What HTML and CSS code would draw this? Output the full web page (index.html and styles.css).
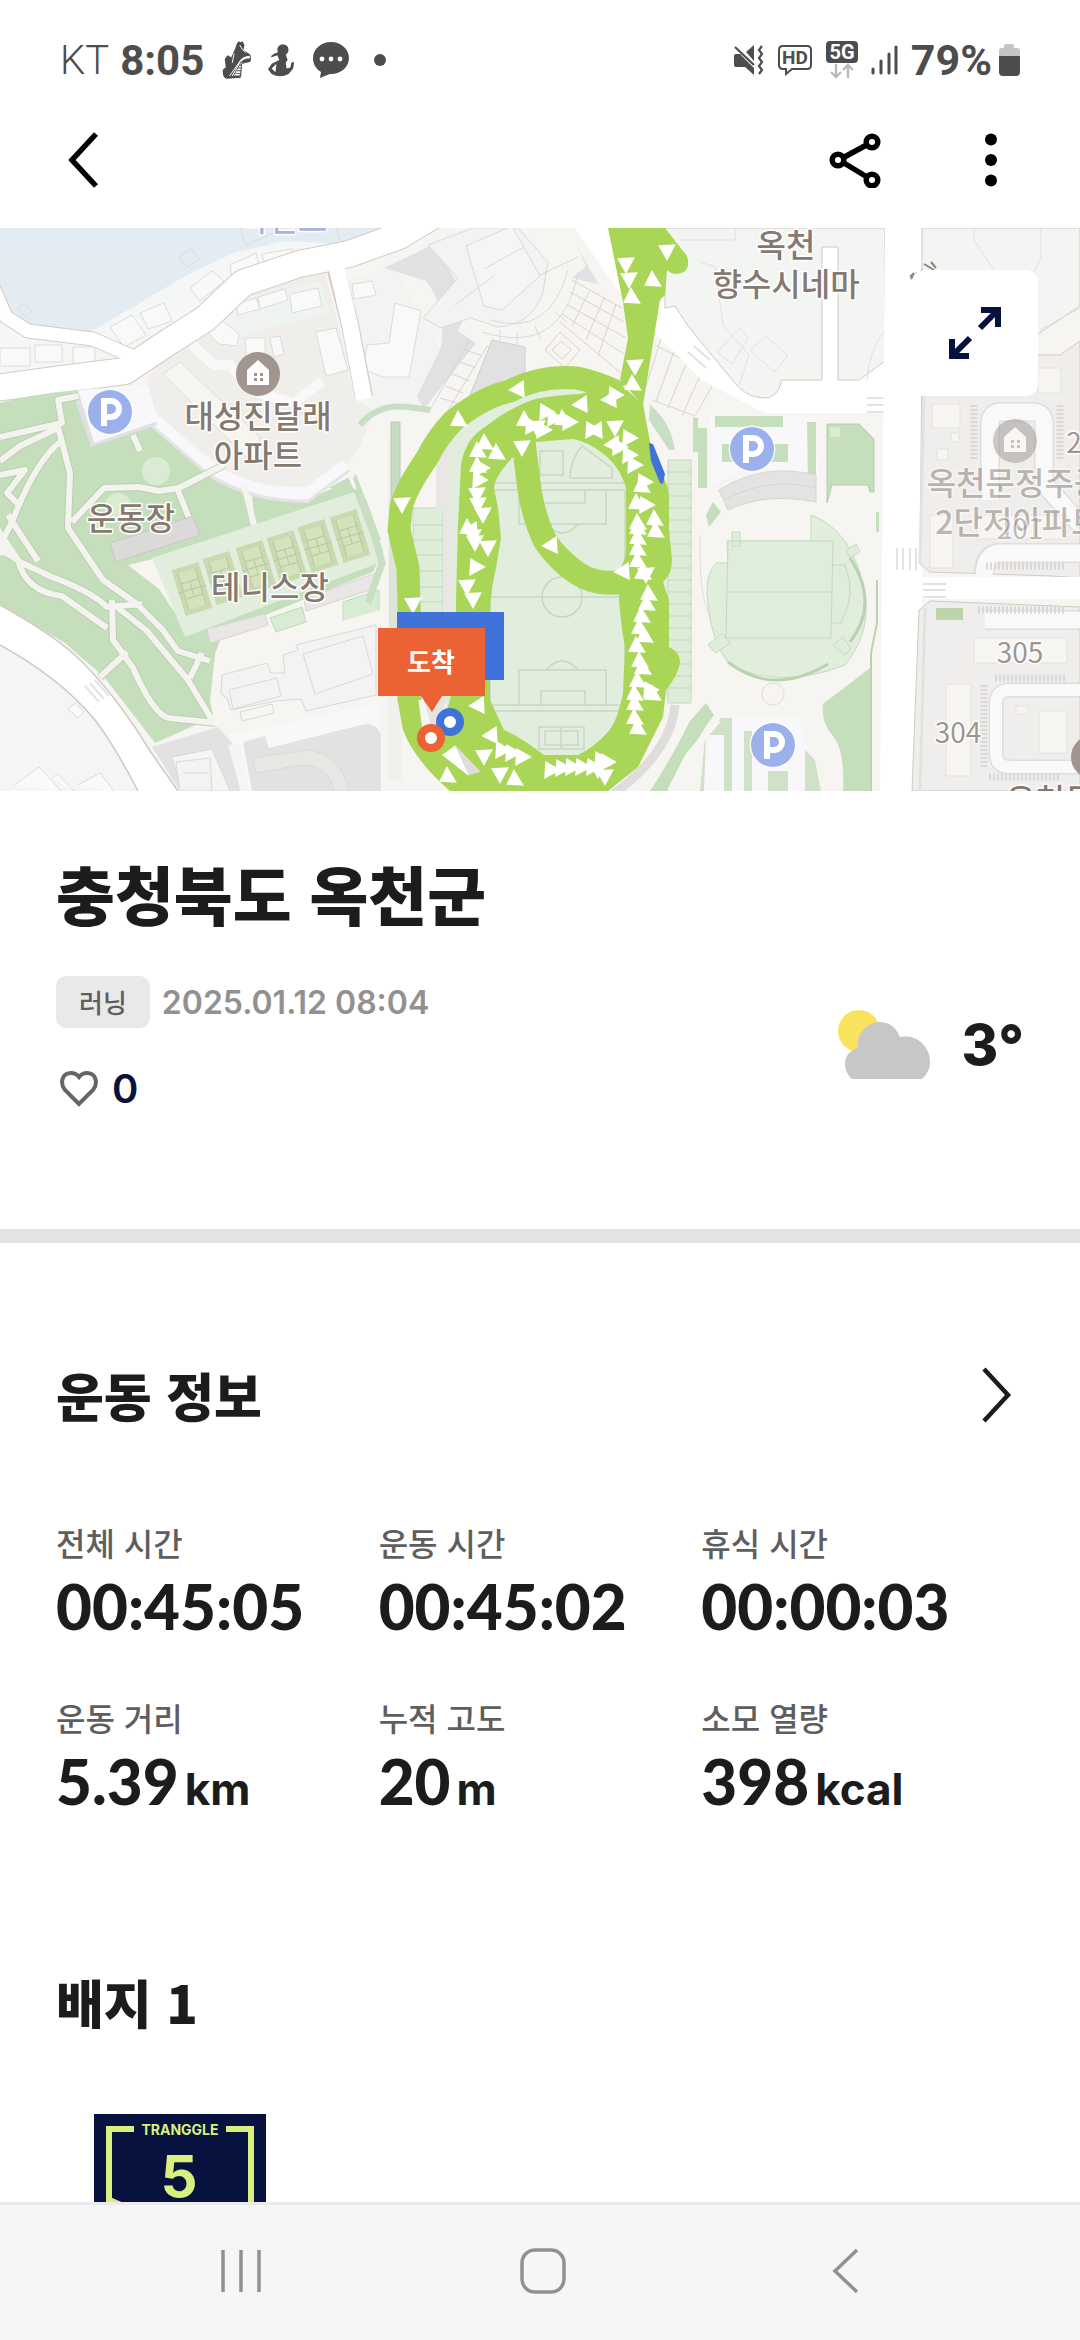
FILE: index.html
```html
<!DOCTYPE html>
<html lang="ko">
<head>
<meta charset="UTF-8">
<meta name="viewport" content="width=device-width, initial-scale=1.0">
<title>운동 기록</title>
<link rel="stylesheet" href="styles.css">
</head>
<body>
<div class="screen">

<div class="status-bar">
<div class="status-left">
<span class="carrier">KT</span>
<span class="clock">8:05</span>
<svg class="shoe" width="30" height="40" viewBox="0 0 32 42">
<path d="M17 3l2-2 2 1 2-1 2 4-1 5 7 5q2 4 0 8l-9 2-1 15-14 1q-6 0-5-10l3-2-1-9 3-4 4 2 4-9z" fill="#4d4d4d"/>
<path d="M30 17q-8 1-11 7L9 38M14 14l-2 10M20 5l3 5 4 3" fill="none" stroke="#fff"/>
<path d="M31 18q-6 0-9 3l-9 16h7M21 25h9M19 28h7M17 31h5M15 34h6" fill="none" stroke="#fff" stroke-width="2"/>
<path d="M22 22l-9 16h8l1-13 9-3" fill="none" stroke="#4d4d4d" stroke-width="1"/>
</svg>
<svg class="runner" width="28" height="34" viewBox="0 0 30 36">
<circle cx="16" cy="7" r="6" fill="#4d4d4d"/>
<path d="M13 9l-6 2-4 3 1 1 6-2 2 5-8 4-4 6 4 5q9 5 18 0l5-6 1-7-3 1-1 5-4 1-1-6 2-3-2-6z" fill="#4d4d4d"/>
<path d="M9 22l-5 5 4 4z" fill="#fff"/>
</svg>
<svg width="36" height="36" viewBox="0 0 36 36">
<path d="M18 0c10 0 18 7 18 16s-8 16-18 16c-2 0-6 2-11 4l1-6C3 27 0 22 0 16 0 7 8 0 18 0z" fill="#4d4d4d"/>
<circle cx="9" cy="17" r="2.4" fill="#fff"/><circle cx="18" cy="17" r="2.4" fill="#fff"/><circle cx="27" cy="17" r="2.4" fill="#fff"/>
</svg>
<span class="more-dot"></span>
</div>
<div class="status-right">
<svg width="30" height="30" viewBox="0 0 30 30">
<path d="M0 11q0-2 2-2h4l14 14v7l-9-8H2q-2 0-2-2zM20 0v16l-8-9z" fill="#4d4d4d"/>
<path d="M1 2l19 18M28 1l-3 4 3 4-3 4 3 4-3 4 3 4-3 4" fill="none" stroke="#4d4d4d" stroke-width="2.2"/>
</svg>
<svg width="36" height="32" viewBox="0 0 36 32">
<path d="M6 2h24q4 0 4 4v15q0 4-4 4H15l-6 5v-5H6q-4 0-4-4V6q0-4 4-4z" fill="none" stroke="#4d4d4d" stroke-width="2"/>
<text x="18" y="20" class="hd">HD</text>
</svg>
<svg width="32" height="38" viewBox="0 0 32 38">
<rect width="32" height="22" rx="4" fill="#4d4d4d"/>
<text x="16" y="18" class="fiveg">5G</text>
<path d="M10 23v13M5 31l5 5 5-5M22 37V24M17 29l5-5 5 5" fill="none" stroke="#b9b9b9" stroke-width="2.4"/>
</svg>
<svg width="27" height="30" viewBox="0 0 27 30">
<path d="M2 24v4M10 16v12M18 9v19M25 2v26" stroke="#4d4d4d" stroke-width="3" stroke-linecap="round"/>
</svg>
<span class="battery-text">79%</span>
<svg width="21" height="32" viewBox="0 0 21 32">
<path d="M0 12V7q0-3 3-3h2V2q0-2 2-2h6q2 0 2 2v2h3q3 0 3 3v5z" fill="#c4c4c4"/>
<path d="M0 12h21v16q0 4-4 4H4q-4 0-4-4z" fill="#4d4d4d"/>
</svg>
</div>
</div>

<header class="app-bar">
<button class="icon-btn" aria-label="뒤로">
<svg width="36" height="58" viewBox="0 0 36 58"><path d="M30 3L6 29l24 26" fill="none" stroke="#000" stroke-width="5.5"/></svg>
</button>
<div class="app-actions">
<button class="icon-btn" aria-label="공유">
<svg width="54" height="56" viewBox="0 0 54 56">
<path d="M11 28L44 10M11 28l33 20" stroke="#000" stroke-width="5.5"/>
<g fill="#fff" stroke="#000" stroke-width="5.5"><circle cx="10" cy="28" r="5.8"/><circle cx="44" cy="10" r="5.8"/><circle cx="44" cy="48" r="5.8"/></g>
</svg>
</button>
<button class="icon-btn" aria-label="더보기">
<svg width="14" height="54" viewBox="0 0 14 54"><circle cx="7" cy="6.5" r="6"/><circle cx="7" cy="27" r="6"/><circle cx="7" cy="47.5" r="6"/></svg>
</button>
</div>
</header>

<main class="content">

<div class="map">
<svg class="map-svg" viewBox="0 228 1080 563">
<defs>
<marker id="up" viewBox="-9 -9 18 18" markerWidth="20" markerHeight="20" markerUnits="userSpaceOnUse"><path d="M-1-8L8 7-8 6z" fill="#fff"/></marker>
<marker id="down" viewBox="-9 -9 18 18" markerWidth="20" markerHeight="20" markerUnits="userSpaceOnUse"><path d="M0 8L8-7-8-6z" fill="#fff"/></marker>
<marker id="right" viewBox="-9 -9 18 18" markerWidth="20" markerHeight="20" markerUnits="userSpaceOnUse"><path d="M8 0L-7 8-6-8z" fill="#fff"/></marker>
<marker id="left" viewBox="-9 -9 18 18" markerWidth="20" markerHeight="20" markerUnits="userSpaceOnUse"><path d="M-8 1L6-8 7 8z" fill="#fff"/></marker>
<g id="parking"><circle r="23.5" fill="#fff" opacity=".8"/><circle r="22" fill="#9cb1eb"/><path d="M-6 14v-25h7a8 8 0 0 1 0 16h-7" fill="none" stroke="#fff" stroke-width="6"/></g>
<g id="home"><circle r="22" fill="#a0968f"/><path d="M-11 11V-4L0-14 11-4v15z" fill="#fff"/><path d="M-4-1h3v3h-3zM2-1h3v3H2zM-4 4h3v3h-3zM2 4h3v3H2z" fill="#a0968f"/></g>
<g id="court"><rect x="-14" y="-24" width="28" height="48" fill="#c9dab0"/><rect x="-9" y="-19" width="18" height="38" fill="#d5e3bd"/><path d="M-9-8H9M-9 8H9M-14 0h28M0-8V8M-9-19v38M9-19v38" fill="none" stroke="#b6c9a0"/></g>
</defs>

<rect y="228" width="1080" height="563" fill="#f7f5f1"/>

<!-- upper left blocks -->
<path d="M0 228h440l-60 30-140 30-60 50-90 0L0 400z" fill="#f5f6f6"/>
<path d="M0 228h400l-38 17-78-4-51 12-46 22-54 32-45 26-58-5-18-12-12-28z" fill="#e4ecf3"/>
<path d="M200 320l40-35 60-20 25 10 15 55 15 70 20 10-15 35-22 34-25 18-28 0-50-20-92-70 5-30z" fill="#efeeeb"/>
<path d="M200 332l38-33 82-17 10 30-90 25-3 12z" fill="#eff4f0"/>
<path d="M345 280l50-12 45 80-25 62-40 5-10-20z" fill="#f1f4f1"/>
<g fill="#f9f9f9" stroke="#dedcd8">
<path d="M110 327l22-12 14 20-22 12zM140 313l24-10 8 18-24 8zM190 288l22-17 12 10-24 20zM230 265l26-12 4 17-28 8zM262 254l30-5 2 14-28 6z"/>
<path d="M0 348h30v18H0zM35 345h27v17H35zM73 347h22v18H73zM236 304l20-6 4 11-22 6zM258 297l27-8 3 11-28 9zM290 294l28-6 4 18-30 7zM205 330l16-10 18 14-2 12-18-2z"/>
<path d="M316 332l20-4 12 42-22 6zM245 338h20v30l-18-4zM270 338l10-2 4 18-10 3zM352 284l20-3 4 14-22 4zM395 303l26 8-12 66-26 0-20-8 4-24 22-2z"/>
<path d="M163 374l17-12 80 75-6 28z" fill="#f7f5f0"/>
<path d="M179 257l12-8 8 10-12 8zM18 309l6-6 8 8-6 6zM240 228l6 17 38-17zM336 228l6 16 40-16z" fill="none"/>
</g>
<path d="M192 345l22 20 16 0 22 26 42 12 28-22" fill="none" stroke="#f8f8f9" stroke-width="10"/>

<!-- roads, upper left -->
<g fill="none" stroke="#d2ccc4" stroke-linejoin="round">
<path d="M-5 388l60-8 70-9 45-30 35-22 38-36 56-19 50-10 50-18 50-30" stroke-width="28"/>
<path d="M-8 285l14 32 22 14 65 8 50 22" stroke-width="15"/>
<path d="M336 270l14 55 14 72" stroke-width="18"/>
</g>
<g fill="none" stroke="#fff" stroke-linejoin="round">
<path d="M-5 388l60-8 70-9 45-30 35-22 38-36 56-19 50-10 50-18 50-30" stroke-width="26"/>
<path d="M-8 285l14 32 22 14 65 8 50 22" stroke-width="13"/>
<path d="M336 265l14 60 14 74" stroke-width="16"/>
</g>

<!-- park -->
<path d="M0 403q35-10 90-14l60 27 58 54 32 14 20 40 95-50 28 76-10 22-150 60-8 22 5 60-65 29-50-65-40-35L0 605z" fill="#c5dfbc"/>
<path d="M239 484l16 14 100-6-8-17 30-40 30 0 30 60-40 60-25-65z" fill="#f7f5f1"/>
<path d="M252 496l50 6 45-20 10 10-102 36z" fill="#c5dfbc"/>
<path d="M356 474l25 66-8-2-20-60z" fill="#c5dfbc"/>
<path d="M148 415l62 54q40 27 96 27l40-30" fill="none" stroke="#e4e4e6" stroke-width="14"/>
<path d="M148 413l62 54q40 27 96 27l40-30" fill="none" stroke="#f8f8fa" stroke-width="11"/>
<path d="M72 392l75-5 10 38-66 22z" fill="#e0e0e2"/>
<path d="M78 390l70-5 10 36-64 22z" fill="#f8f8fa"/>
<g fill="none" stroke="#b9d0af" stroke-width="8" stroke-linejoin="round">
<path d="M0 437l62-14-4-23 20-4M57 423l13 50-2 55 35 52 34 24 25 25 16 22 32 10M0 461l20-15 38-18M60 442q-25 20-48 80L0 545M0 475l25-5-18 23 12 12M72 522l32-34 35-1 20 4 20-3 45-23M177 488l12 30M0 549l22 14 30 14q40 15 55 30l35-3M18 560q8 32 44 36l45 32M8 515l30 46"/>
<path d="M112 600l1 40 20 28q20 45 35 50l50 5M118 608l28 22 42 50 24 40M202 653l-12 25M100 677l27-25M133 435l7 16"/>
</g>
<g fill="none" stroke="#f5f3ef" stroke-width="6" stroke-linejoin="round">
<path d="M0 437l62-14-4-23 20-4M57 423l13 50-2 55 35 52 34 24 25 25 16 22 32 10M0 461l20-15 38-18M60 442q-25 20-48 80L0 545M0 475l25-5-18 23 12 12M72 522l32-34 35-1 20 4 20-3 45-23M177 488l12 30M0 549l22 14 30 14q40 15 55 30l35-3M18 560q8 32 44 36l45 32M8 515l30 46"/>
<path d="M112 600l1 40 20 28q20 45 35 50l50 5M118 608l28 22 42 50 24 40M202 653l-12 25M100 677l27-25M133 435l7 16M244 485l10 40"/>
</g>
<path d="M0 528l12 18 8 12-20-3z" fill="#f5f3ef"/>
<circle cx="156" cy="471" r="14" fill="#d9ebd3"/><circle cx="118" cy="506" r="13" fill="#d9ebd3"/>
<path d="M110 543l83-27 7 19-84 27z" fill="#dcdad9" stroke="#c9c6c4"/>
<path d="M128 565l25-6 26 60-20-30z" fill="#f7f5f1"/>
<path d="M152 558l202-66 27 70-196 75z" fill="#e1eedd"/>
<use href="#court" transform="translate(192 589) rotate(-17)"/>
<use href="#court" transform="translate(223 578) rotate(-17)"/>
<use href="#court" transform="translate(256 567) rotate(-17)"/>
<use href="#court" transform="translate(287 557) rotate(-17)"/>
<use href="#court" transform="translate(318 546) rotate(-17)"/>
<use href="#court" transform="translate(350 536) rotate(-17)"/>
<g stroke="#d8d4d0" fill="#e9e7e5">
<path d="M207 629l58-15 3 11-58 18zM304 599l72-26v15l-70 23z"/>
<path d="M270 618l32-11 4 15-30 10zM343 602l36-12v25l-36 8z" fill="#d8ebd3" stroke="#c2dabc"/>
</g>

<!-- sports hall and lower blocks -->
<path d="M215 655l80-28 10 5 75-22v200H150l4-44 64-24-8-42z" fill="#f7f5f1"/>
<path d="M230 735l150-32v88H248z" fill="#f8f8f9"/>
<path d="M152 747l66-20 14 16 8 48h-60zM243 742l22-6 4 12 96-24q14 0 16 12v55H252z" fill="#e2e2e2"/>
<g fill="#f3f3f3" stroke="#d9d9da">
<path d="M222 675l45-12 4 10 14 0-2-18 15-5-2-5 80-20v70l-70 16-5-12-25 2-45 9-4-12-6-4z"/>
<path d="M303 654l60-18 10 38-58 20zM229 690l48-12 4 18-48 13zM240 712l32-8 2 9-32 8z" fill="none"/>
<path d="M172 757l40-8 18 42h-48z" fill="#f7f5f1"/><path d="M176 762l34-4 2 33h-32zM183 773l26 0"/>
<path d="M252 758l55-8q35 4 42 41h-15q-5-26-32-26l-46 8z" fill="#e9e7e3"/>
<path d="M228 745l12-2 10 48h-9z" fill="#f7f5f1" stroke="none"/>
</g>
<path d="M0 645l40 25 55 50 25 45 18 30H0z" fill="#f5f5f5"/>
<path d="M0 605q50 28 75 50 40 38 75 96l28 40h-40q-25-48-43-71Q60 678 0 645z" fill="#fff"/>
<path d="M0 605q50 28 75 50 40 38 75 96l28 40M138 791q-25-48-43-71Q60 678 0 645" fill="none" stroke="#cfc9c0" stroke-width="1.5"/>
<path d="M85 686l14 16M90 683l14 16M95 680l14 16" stroke="#dfe5e8" stroke-width="2"/>
<path d="M15 785l24-18 22 24M78 785l22-12 14 18M52 778l6-4 16 17M68 709l8-6 8 9-6 6z" fill="#fafafa" stroke="#dcdcdc"/>

<!-- plaza in the middle -->
<path d="M384 268l50-24 36 60-12 27 18 12-52 66-7-12 24-50q6-40-15-66z" fill="#e1e1e3"/>
<path d="M492 340l33 7v38l-58 18z" fill="#e1e1e3" stroke="#cfcfd2"/>
<path d="M572 278l14-12-10-22 22 40z" fill="#e1e1e3"/>
<g fill="#f3f3f4" stroke="#dadadd">
<path d="M428 245l45-17h45l30 34-5 30q-10 32-45 35l-27-9-30 10-18-10 35-40z"/>
<path d="M466 246l46-20 28 50-38 34-18-4z" fill="#f5f5f6"/>
<path d="M484 269l40-22M455 305l40-30M540 275l38-18" fill="none"/>
<path d="M490 320q60 18 78-50M482 332q80 25 96-60M500 330v12M517 332v13M535 326l6 14M555 312l12 10" fill="none"/>
<path d="M470 340l-40 70M488 345l-40 65M466 350l16 6M460 362l16 6M452 374l18 7M446 386l17 7M440 398l17 5" fill="none" stroke="#d8d5d1"/>
<path d="M545 350l15-18 20 18-15 18zM552 350l9-9 10 9-9 9z" fill="none" stroke="#d8d5d1"/>
<path d="M572 280l50 28M570 292l54 30M566 304l60 34M562 314l62 40M560 322l62 52M590 290l-18 36M604 298l-18 42M616 304l-18 52" fill="none" stroke="#d8d5d1"/>
<path d="M664 335l60 36M655 345l62 32M652 400l60 22M664 330l-20 62M678 340l-22 62M692 350l-24 58M706 362l-24 54M720 372l-26 46" fill="none" stroke="#d8d5d1"/>
</g>
<path d="M360 425q18-22 48-18l22 3" fill="none" stroke="#c8dfc2" stroke-width="6"/>
<path d="M360 495q10 20 22 68l-14 40" fill="none" stroke="#c8dfc2" stroke-width="7"/>

<!-- theatre block and diagonal road -->
<path d="M573 226l60 85 70 70 62 32h155v-190z" fill="#fff"/>
<path d="M610 228h275v133l-26 19h-78v3q-4 16-18 15-18-1-30-17l-45-55-13-20-10 2v-30z" fill="#f2f5f2" stroke="#d0cac2"/>
<path d="M822 383v-136h16v136z" fill="#fff"/><path d="M822 380V247h16v133" fill="none" stroke="#d0cac2"/>
<g fill="none" stroke="#e0e2df"><path d="M680 240h55v-12M700 262l15 5 8 58 26 30-10 30M750 350l16-14 22 20-14 16zM717 352l23-24 8 10-16 26zM885 330q-16 20-18 50"/></g>
<path d="M867 398h23M867 405h23M867 412h23M688 352l18 16M694 346l16 14" stroke="#dfe4e6" stroke-width="2"/>

<!-- right hand park -->
<path d="M695 415h172l16 20v356H660z" fill="#f7f5f1"/>
<path d="M710 416h105l4 66q-60-30-108 5z" fill="#f8f8fa"/>
<path d="M715 416h68v11h-68zM698 428h9v60h-9zM807 422h9v60l-8-2zM722 444h66v18h-66zM693 418h5v34h-5z" fill="#c5dfbc"/>
<path d="M719 490q45-28 97-15v27q-50-10-88 8z" fill="#e4e3e2" stroke="#d6d5d4"/>
<path d="M724 500q45-24 92-12" fill="none" stroke="#d6d5d4"/>
<path d="M827 424h32l15 15v53h-4l-2-7h-36l-5 18z" fill="#c5dfbc" stroke="#b4ccac"/>
<path d="M830 427h10v10h-10z" fill="#d9ebd3"/>
<path d="M706 515l7-13 8 10-12 15zM876 512h3v20h-3zM870 668l-47 36q-2 20 10 32 12 14 10 55h27z" fill="#c5dfbc"/>
<path d="M877 580v43l-6 30v138" fill="none" stroke="#b9d3b1" stroke-width="2"/>
<path d="M700 535q-2 80 20 95 60 30 110 8" fill="none" stroke="#e2dfda"/>
<path d="M727 541h84V515q28 10 42 40 30 64-8 110-65 25-115 0-18-22-22-60-4-30 8-42l12 0z" fill="#e0eedb" stroke="#c9d8c4"/>
<path d="M850 558q30 45 0 84M728 662q45 35 100 2" fill="none" stroke="#b9d3b1" stroke-width="3"/>
<path d="M728 541h105l-2 97H726zM727 592h106M833 565h12q12 28-4 58h-10M732 532h8v14h-8zM846 550l10-6 4 8-10 6zM708 645l14-12 8 10-14 10zM833 645l10-8 8 12-6 6z" fill="#dfeeda" stroke="#c9d8c4"/>
<circle cx="773" cy="694" r="11" fill="none" stroke="#e0ddd8"/>
<path d="M715 718h85l15 73H700z" fill="#f8f8fa"/>
<path d="M700 791l5-55 6-8 10-10h11v73h-8v-56h-18l-2 56zM752 791v-60h-8v60zM768 791v-20h20v20zM805 750l10 10 6 31h-16z" fill="#cfe2c8"/>
<path d="M650 791q20-30 40-70l16-18 8 12-10 14-35 62z" fill="#c5dfbc"/>
<path d="M718 720l-30 36-18 35" fill="none" stroke="#f8f6f2" stroke-width="6"/>

<!-- running field -->
<path d="M388 440h14v340h-14z" fill="#f2f0ec"/>
<path d="M391 422h9v100h-9z" fill="#c9dbc3" stroke="#bccdb7"/>
<path d="M389 500h9v160h-9z" fill="#dde4d8"/>
<path d="M650 405q20 15 25 45l-6 0-20-30z" fill="#c9dfc3"/>
<path d="M440 445q40-60 110-60l80 10 38 100v200l-38 80-100 22-60-10-24-60V620z" fill="#e1eedd"/>
<path d="M413 508h30v120h-30zM668 460h23v243h-23z" fill="#deedd8" stroke="#c6d5c1"/>
<path d="M413 525h30M413 540h30M413 555h30M413 571h30M413 587h30M413 602h30M668 472h24M668 484h24M668 496h24M668 508h24M668 520h24M668 532h24M668 544h24M668 556h24M668 568h24M668 580h24M668 592h24M668 604h24M668 616h24M668 628h24M668 640h24M668 652h24M668 664h24M668 676h24M668 688h24" stroke="#c6d5c1"/>
<path d="M436 450h14v60h-14zM443 510h8v160h-8z" fill="#eae6e4"/>
<g fill="none" stroke="#c9d6c5" stroke-width="1.5">
<path d="M490 483h135M490 490v215h135V490zM490 597h135M490 711h135M519 490v34h87v-34M541 490v13h44v-13M519 705v-35h87v35M541 705v-14h44v14M540 451h23v24h-23zM570 478q0-18 12-32l30 22v10zM539 727h45v22h-45zM545 731h33v14h-33zM561 727v22"/>
<circle cx="562" cy="597" r="20"/><path d="M546 524q16 18 32 0M546 670q16-18 32 0"/>
</g>
<path d="M675 705q-4 50-70 95" fill="none" stroke="#dedddb" stroke-width="9"/>
<path d="M422 695h26l-14 40z" fill="#e6e4e2"/>

<!-- recorded track -->
<path fill="#a9d656" fill-rule="evenodd" d="M458 525l3-60q4-26 24-38 25-20 50-28 20-4 45-5l40-10 23 20 7 38q4 18 14 36 5 10 5 20v32l3 30q0 14-9 22l6 18v47q12 6 11 16-2 12-14 27l-3 27-25 50-30 24H450q-35-30-47-61l-6-33 20-8 5 38q8 15 18 0 10-20 14-48l2-30V600zM512 458q-18 20-18 30l4 20 3 30-5 30q-5 20-6 45v87l14 30q15 6 40 25h34q15-7 29-22 10-10 16-40l2-46-3-17-3-30 1-32q6-8 6-20v-60q-6-22-25-36-13-10-28-13l-38 3z"/>
<path d="M410 700l-1-96-1-36-9-38 2-22q4-18 26-50 10-20 26-37 30-24 57-30 30-16 67-13 20 4 43 15" fill="none" stroke="#a9d656" stroke-width="23"/>
<path d="M453 446q20-26 52-40 40-20 80-14-50 0-88 18-26 14-36 32z" fill="#e1eedd"/>
<path d="M523 438l6 48q4 30 16 55 14 20 32 32 20 14 52 8" fill="none" stroke="#a9d656" stroke-width="24"/>
<path d="M608 228h57l22 28q5 16-10 18-6 0-10-4l-2 25-5 5-17 105-23-25 8-42-5-36z" fill="#a9d656"/>
<path d="M649 443l4 1 12 30-2 10-3-1-9-22z" fill="#3f73da"/>
<path d="M443 755l12-10 26 27-12 3z" fill="#dfdcda"/><path d="M442 755l13-9 14 30z" fill="#fff"/>
<g fill="none">
<path marker-start="url(#up)" marker-mid="url(#up)" marker-end="url(#up)" d="M459 419L653 279L632 296L633 383L525 419L563 418L485 442L478 450L497 452L478 465L642 485L637 502L638 522L655 518L656 530L638 527L638 537L638 548L638 560L643 572L649 593L647 603L642 615L640 627L645 635L637 645L640 660L643 667L638 680L635 693L653 693L635 703L635 717L638 727L448 775L515 778L468 527"/>
<path marker-start="url(#down)" marker-mid="url(#down)" marker-end="url(#down)" d="M667 252L626 265L629 280L635 367L402 505L522 448L615 428L477 495L478 505L537 428L413 605L467 587L473 600L475 543L488 548L473 537L500 775L484 757L483 515L605 777L598 770L646 575"/>
<path marker-start="url(#right)" marker-mid="url(#right)" marker-end="url(#right)" d="M477 567L480 480L482 468L630 438L630 455L620 447L635 465L645 482L647 505L593 430L547 412L555 418L570 422L533 426L544 430L616 395L552 770L563 768L573 767L583 767L608 762L602 760L594 767L523 757L513 753L503 750L651 690"/>
<path marker-start="url(#left)" marker-mid="url(#left)" marker-end="url(#left)" d="M517 389L477 705L550 545L490 735L580 404L609 399L595 430L612 444L470 530L622 571"/>
</g>
<path d="M397 612h107v68H397z" fill="#3f73da"/>
<path d="M378 628h107v68h-43l-10 16-11-16h-43z" fill="#eb6234"/>
<text x="431" y="672" class="pin-text">도착</text>
<circle cx="450" cy="722" r="10" fill="#fff" stroke="#3f73da" stroke-width="8"/>
<circle cx="431" cy="738" r="10" fill="#fff" stroke="#eb6234" stroke-width="8"/>

<!-- apartments on the right -->
<path d="M885 228h37v563h-42z" fill="#fff"/>
<path d="M922 228h158v78l-42 28H922z" fill="#f2f5f2" stroke="#d0cac2"/>
<path d="M974 228v12l30 45M1041 228v30l-20 40M1040 330l40-22" fill="none" stroke="#dfe0dd"/>
<path d="M922 355h138l20-14v237l-28-2-122-4-10-8z" fill="#efeeec" stroke="#d0cac2"/>
<path d="M930 601l150 6v184H912l7-181z" fill="#efeeec" stroke="#d0cac2"/>
<path d="M920 395l4-1-4 170M925 608l-5 183" fill="none" stroke="#e0e4df" stroke-width="3"/>
<g fill="none" stroke="#dedddf" stroke-linejoin="round">
<path d="M990 500v-76q0-12 12-12h30q12 0 12 12v60l36 40M1080 553h-80q-16 0-16 20M1080 620h-95" stroke-width="20"/>
<path d="M1080 690h-70q-14 0-14 14v50q0 13 14 13h70" stroke-width="15"/>
</g>
<g fill="none" stroke="#f9f9fa" stroke-linejoin="round">
<path d="M990 500v-76q0-12 12-12h30q12 0 12 12v60l36 40M1080 553h-80q-16 0-16 26M1080 620h-95" stroke-width="17"/>
<path d="M1080 690h-70q-14 0-14 14v50q0 13 14 13h70" stroke-width="12"/>
</g>
<path d="M900 577h180v22H900z" fill="#fff"/>
<path d="M932 404h28v24h-28zM951 433h8v9h-8zM937 449h11v11h-11zM1038 368h23v25h-23zM974 638h93v25h-93zM946 684h25v92h-25zM1039 711h28v42h-28zM1016 706h12v8h-12zM930 515h23v53h-23zM977 515h90v24h-90z" fill="#f7f5f1" stroke="#e5e2df"/>
<path d="M986 566h78M995 678h72M984 685v82M989 777h72M978 610h88M974 405v55M1060 405v55" stroke="#dcd8d6" stroke-width="7" stroke-dasharray="2 2"/>
<path d="M936 608h27v12h-27z" fill="#bdd3a8"/>
<path d="M897 548v22M903 548v22M910 548v22M916 548v22M923 584h23M923 590h23M923 597h23" stroke="#dfe4e6" stroke-width="2"/>
<path d="M911 279l6-6M914 273l-4 4M921 270l4 4M924 264l10 6M931 262l5 6" stroke="#8a8580" stroke-width="2"/>

<use href="#parking" x="110" y="412"/>
<use href="#parking" x="752" y="449"/>
<use href="#parking" x="773" y="745"/>
<use href="#home" x="258" y="374"/>
<use href="#home" x="1015" y="441" opacity=".5"/>
<use href="#home" x="1093" y="757"/>
<g class="place">
<text x="258" y="428">대성진달래</text>
<text x="258" y="467">아파트</text>
<text x="131" y="530">운동장</text>
<text x="270" y="599">테니스장</text>
<text x="786" y="257">옥천</text>
<text x="786" y="296">향수시네마</text>
<text x="283" y="231" class="river">옥천초</text>
<text x="1065" y="812">옥천문정</text>
</g>
<g class="place faded">
<text x="1015" y="495">옥천문정주공</text>
<text x="1018" y="534">2단지아파트</text>
</g>
<g class="place num">
<text x="1020" y="539" opacity=".6">201</text>
<text x="1074" y="453">2</text>
<text x="1020" y="663">305</text>
<text x="958" y="743">304</text>
</g>
</svg>
<button class="expand-btn" aria-label="지도 확대">
<svg width="52" height="52" viewBox="0 0 52 52"><path d="M32 3h17v17M47 5L31 21M20 49H3V32M5 47l16-16" fill="none" stroke="#07123f" stroke-width="6"/></svg>
</button>
</div>

<section class="summary">
<h1>충청북도 옥천군</h1>
<div class="summary-row">
<div class="summary-info">
<div class="meta">
<span class="tag">러닝</span>
<time class="date">2025.01.12 08:04</time>
</div>
<button class="like" aria-label="좋아요">
<svg width="38" height="36" viewBox="0 0 38 36"><path d="M19 33L5 19C-1 11 3 2 11 2q5 0 8 4 3-4 8-4c8 0 12 9 6 17z" fill="none" stroke="#666" stroke-width="4"/></svg>
<span>0</span>
</button>
</div>
<div class="weather">
<svg width="92" height="70" viewBox="0 0 92 70">
<circle cx="21" cy="21" r="21" fill="#fae35c"/>
<path d="M14 69Q7 63 7 54q0-12 13-16-2-10 6-19 7-7 15-7 15 0 21 15 12-3 22 6 8 8 8 19 0 10-8 17z" fill="#c7c7c7"/>
</svg>
<span>3°</span>
</div>
</div>
</section>

<section class="workout">
<div class="section-head">
<h2>운동 정보</h2>
<button class="icon-btn" aria-label="운동 정보 더보기">
<svg width="36" height="58" viewBox="0 0 36 58"><path d="M6 3l24 26L6 55" fill="none" stroke="#1c1c1c" stroke-width="4.5"/></svg>
</button>
</div>
<dl class="stats">
<div class="stat"><dt>전체 시간</dt><dd>00:45:05</dd></div>
<div class="stat"><dt>운동 시간</dt><dd>00:45:02</dd></div>
<div class="stat"><dt>휴식 시간</dt><dd>00:00:03</dd></div>
<div class="stat"><dt>운동 거리</dt><dd>5.39<small>km</small></dd></div>
<div class="stat"><dt>누적 고도</dt><dd>20<small>m</small></dd></div>
<div class="stat"><dt>소모 열량</dt><dd>398<small>kcal</small></dd></div>
</dl>
</section>

<section class="badges">
<h2>배지 1</h2>
<svg class="badge" width="172" height="200" viewBox="0 0 172 200">
<path d="M0 0h172v150l-86 50-86-50z" fill="#07123f"/>
<path d="M40 15H15v120l71 45 71-45V15h-25" fill="none" stroke="#daf07e" stroke-width="6"/>
<path d="M14 82l20 9v20H14z" fill="#daf07e"/>
<text x="86" y="21" class="badge-brand">TRANGGLE</text>
<text x="85" y="83" class="badge-num">5</text>
</svg>
</section>
</main>

<nav class="nav-bar">
<button aria-label="최근 앱"><svg width="44" height="46" viewBox="0 0 44 46"><path d="M4 2v42M22 2v42M40 2v42" stroke="#919191" stroke-width="3.5"/></svg></button>
<button aria-label="홈"><svg width="46" height="46" viewBox="0 0 46 46"><rect x="2" y="2" width="42" height="42" rx="13" fill="none" stroke="#919191" stroke-width="3.5"/></svg></button>
<button aria-label="뒤로 가기"><svg width="30" height="46" viewBox="0 0 30 46"><path d="M27 2L5 23l22 21" fill="none" stroke="#919191" stroke-width="3.5"/></svg></button>
</nav>

</div>
</body>
</html>
```
FILE: styles.css
```css
* {
box-sizing: border-box;
}
body {
margin: 0;
background: #fff;
color: #1c1c1c;
font-family: Inter, "Noto Sans CJK KR", sans-serif;
}
h1, h2, dl, dd {
margin: 0;
}
h1, h2, dt, .tag {
font-family: "Noto Sans CJK KR", sans-serif;
}
h1, h2 {
font-weight: 900;
}
button {
padding: 0;
border: none;
background: none;
color: inherit;
font: inherit;
cursor: pointer;
}
svg {
display: block;
}
.screen {
display: flex;
flex-direction: column;
height: 100vh;
}

/* status bar */
.status-bar {
display: flex;
justify-content: space-between;
align-items: center;
height: 102px;
padding: 18px 60px 0;
color: #4d4d4d;
font-family: Roboto, sans-serif;
font-size: 42px;
flex: none;
}
.status-left, .status-right {
display: flex;
align-items: center;
}
.status-left {
gap: 17px;
}
.status-right {
gap: 13px;
}
.carrier {
margin-right: -6px;
font-size: 40px;
font-weight: 300;
}
.clock, .battery-text {
font-weight: 700;
}
.battery-text {
margin-right: -6px;
font-size: 43px;
}
.more-dot {
width: 12px;
height: 12px;
margin-left: 8px;
border-radius: 50%;
background: #4d4d4d;
}
.hd, .fiveg {
font-weight: 700;
text-anchor: middle;
}
.hd {
font-size: 19px;
fill: #4d4d4d;
}
.fiveg {
font-size: 20px;
fill: #fff;
}

/* app bar */
.app-bar {
display: flex;
justify-content: space-between;
align-items: center;
height: 126px;
padding: 0 82px 10px 66px;
flex: none;
}
.app-actions {
display: flex;
align-items: center;
gap: 102px;
}

.content {
flex: 1;
min-height: 0;
overflow: hidden;
}

/* map */
.map {
position: relative;
}
.map-svg {
width: 100%;
height: auto;
}
.expand-btn {
position: absolute;
top: 42px;
right: 42px;
display: flex;
align-items: center;
justify-content: center;
width: 126px;
height: 126px;
border-radius: 12px;
background: #fff;
}
.place {
font-family: "Noto Sans CJK KR", sans-serif;
font-size: 32px;
font-weight: 500;
text-anchor: middle;
fill: #857970;
stroke: #fff;
stroke-width: 3px;
stroke-linejoin: round;
paint-order: stroke;
}
.faded {
opacity: .5;
}
.num {
font-size: 28px;
font-weight: 400;
fill: #a0958e;
}
.river {
fill: #a9b4dc;
}
.pin-text {
font-family: "Noto Sans CJK KR", sans-serif;
font-size: 26px;
font-weight: 700;
text-anchor: middle;
fill: #fff;
}

/* summary */
.summary {
padding: 57px 56px 116px;
border-bottom: 14px solid #e3e3e3;
}
h1 {
font-size: 64px;
line-height: 88px;
}
.summary-row {
display: flex;
justify-content: space-between;
align-items: center;
margin-top: 40px;
}
.meta {
display: flex;
align-items: center;
gap: 12px;
}
.tag {
padding: 0 23px;
border-radius: 10px;
background: #e9e9e9;
color: #5e5e5e;
font-size: 26px;
font-weight: 500;
line-height: 52px;
}
.date {
color: #919191;
font-size: 32px;
font-weight: 600;
}
.like {
display: flex;
align-items: center;
gap: 14px;
margin-top: 37px;
padding-left: 4px;
color: #07123f;
font-size: 40px;
font-weight: 600;
line-height: 48px;
}
.weather {
display: flex;
align-items: center;
gap: 32px;
font-size: 56px;
font-weight: 800;
}

/* workout */
.workout {
padding: 108px 56px 0;
}
.section-head {
display: flex;
justify-content: space-between;
align-items: center;
padding-right: 10px;
}
h2 {
font-size: 52px;
line-height: 88px;
}
.stats {
display: grid;
grid-template-columns: repeat(3, 1fr);
row-gap: 47px;
margin-top: 79px;
}
dt {
color: #5e5e5e;
font-size: 32px;
font-weight: 500;
line-height: 48px;
}
dd {
font-family: Lato, sans-serif;
font-size: 62px;
font-weight: 900;
line-height: 80px;
}
dd small {
margin-left: 6px;
font-family: Inter, sans-serif;
font-size: 44px;
font-weight: 700;
}

/* badges */
.badges {
padding: 129px 56px 0;
}
.badge {
margin: 68px 0 0 38px;
}
.badge-brand, .badge-num {
font-weight: 700;
text-anchor: middle;
fill: #daf07e;
}
.badge-brand {
font-size: 14px;
}
.badge-num {
font-size: 58px;
}

/* navigation */
.nav-bar {
display: grid;
grid-template-columns: repeat(3, 1fr);
height: 138px;
padding: 0 84px 4px 90px;
border-top: 3px solid #ebebeb;
background: #f6f6f8;
flex: none;
}
.nav-bar button {
display: flex;
align-items: center;
justify-content: center;
}
```
